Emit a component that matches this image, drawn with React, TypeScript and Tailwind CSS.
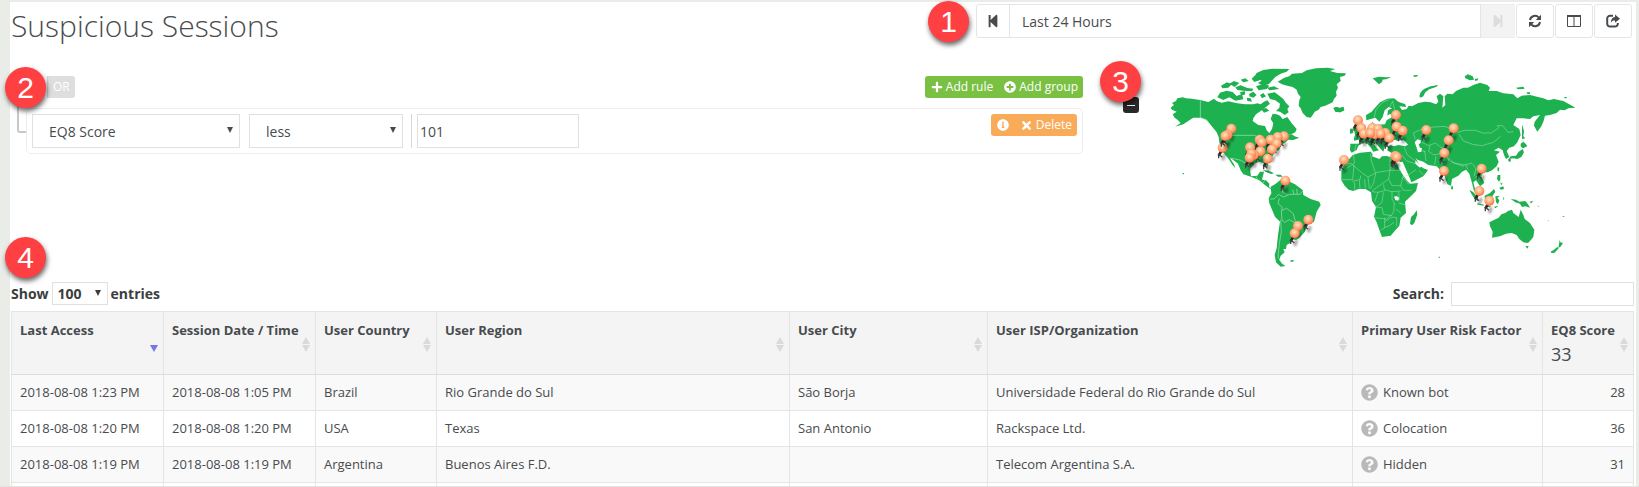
import React, { FC, ReactNode } from "react";
import {
  FaInfoCircle,
  FaPlus,
  FaPlusCircle,
  FaQuestionCircle,
  FaStepBackward,
  FaStepForward,
  FaTimes,
} from "react-icons/fa";

const columns = [
  { title: "Last Access", width: "w-[152px]" },
  { title: "Session Date / Time", width: "w-[152px]" },
  { title: "User Country", width: "w-[121px]" },
  { title: "User Region", width: "w-auto" },
  { title: "User City", width: "w-[198px]" },
  { title: "User ISP/Organization", width: "w-[365px]" },
  { title: "Primary User Risk Factor", width: "w-[190px]" },
  { title: "EQ8 Score", width: "w-[91px]" },
];

const sessions = [
  {
    last: "2018-08-08 1:23 PM",
    start: "2018-08-08 1:05 PM",
    country: "Brazil",
    region: "Rio Grande do Sul",
    city: "São Borja",
    isp: "Universidade Federal do Rio Grande do Sul",
    risk: "Known bot",
    score: 28,
  },
  {
    last: "2018-08-08 1:20 PM",
    start: "2018-08-08 1:20 PM",
    country: "USA",
    region: "Texas",
    city: "San Antonio",
    isp: "Rackspace Ltd.",
    risk: "Colocation",
    score: 36,
  },
  {
    last: "2018-08-08 1:19 PM",
    start: "2018-08-08 1:19 PM",
    country: "Argentina",
    region: "Buenos Aires F.D.",
    city: "",
    isp: "Telecom Argentina S.A.",
    risk: "Hidden",
    score: 31,
  },
];

// pin heads on the map, back to front
const pins = [
  [244, 221], [232, 240], [218, 278], [226, 243],
  [329, 254], [402, 244], [383, 246], [362, 254], [335, 262], [380, 265],
  [366, 283], [353, 311], [331, 289], [300, 277], [312, 300], [304, 296], [299, 308],
  [406, 377], [475, 494], [444, 513], [434, 535], [582, 315],
  [738, 180], [740, 215], [758, 227], [624, 196], [634, 219], [642, 236],
  [667, 219], [684, 222], [676, 238], [706, 234], [692, 236], [661, 234], [718, 249],
  [829, 225], [911, 220], [896, 256], [883, 294], [736, 303], [740, 306],
  [882, 348], [995, 341], [988, 408], [1018, 437],
];

const RefreshIcon: FC = () => (
  <svg viewBox="0 0 14 14" className="size-[14px]" fill="none" stroke="currentColor" strokeWidth="2">
    <path d="M2 6A5 5 0 0 1 10.8 3.6" />
    <path d="M12 8A5 5 0 0 1 3.2 10.4" />
    <path d="M13 .8V6H7.8zM1 13.200V8h5.200z" fill="currentColor" stroke="none" />
  </svg>
);

const ColumnsIcon: FC = () => (
  <svg viewBox="0 0 14 14" className="size-[14px]" fill="none" stroke="currentColor">
    <path d="M.5 1.500h13v11H.5zM7 2v11" />
    <path d="M0 2h14" strokeWidth="2" />
  </svg>
);

const ShareIcon: FC = () => (
  <svg viewBox="0 0 14 14" className="size-[14px]">
    <path
      d="M7 1.800H4A2.800 2.800 0 0 0 1.200 4.600v5.200A2.800 2.800 0 0 0 4 12.600h5a2.800 2.800 0 0 0 2.800-2.800V9"
      fill="none"
      stroke="currentColor"
      strokeWidth="2"
    />
    <path d="M9 .5 14 4.700 9 8.800V6.500C7 6.400 5.800 7 4.900 8.600 4.900 5.200 6.200 3.200 9 2.900z" fill="currentColor" />
  </svg>
);

const Caret: FC<{ className: string }> = ({ className }) => (
  <svg viewBox="0 0 6 6" className={`pointer-events-none absolute size-[6px] ${className}`}>
    <path d="M0 0h6L3 6z" fill="currentColor" />
  </svg>
);

const Badge: FC<{ children: ReactNode; className: string }> = ({ children, className }) => (
  <span
    className={`absolute z-10 grid size-[41px] place-content-center rounded-full bg-[#ff4043] font-['Liberation_Sans',sans-serif] text-[30px] leading-none text-white shadow-[1px_3px_5px_rgba(0,0,0,0.6)] ${className}`}
  >
    {children}
  </span>
);

const SortIcon: FC<{ sorted: boolean }> = ({ sorted }) => (
  <svg viewBox="0 0 8 15" className="absolute right-[5px] top-[25px] h-[15px] w-[8px]">
    {!sorted && <path d="M4 0l4 7H0z" fill="#dadada" />}
    <path d="M0 8h8l-4 7z" fill={sorted ? "#7479e2" : "#dadada"} />
  </svg>
);

const WorldMap: FC = () => (
  <svg viewBox="0 0 1320 645" className="h-[215px] w-[440px]" role="img" aria-label="Sessions by location">
    <defs>
      <radialGradient id="head" cx="45%" cy="38%" r="62%">
        <stop offset="0" stopColor="#ffe6c9" />
        <stop offset="0.500" stopColor="#ffb280" />
        <stop offset="0.850" stopColor="#fd8558" />
        <stop offset="1" stopColor="#f2603a" />
      </radialGradient>
      <filter id="soft" x="-100%" y="-100%" width="300%" height="300%">
        <feGaussianBlur stdDeviation="3" />
      </filter>
    </defs>

    {/* the Americas */}
    <g fill="#1eb14f">
      <path d="M62 158L72 150 66 144 78 138 82 130 98 127 108 130 125 131 150 135 175 141 192 131 200 138 215 143 235 139 262 145 285 148 310 148 322 145 332 148 342 140 352 136 360 146 345 158 332 168 318 178 310 190 308 198 325 210 345 213 350 226 358 234 366 222 370 205 362 192 368 176 380 178 390 182 398 192 412 186 425 205 440 222 436 232 425 237 400 240 425 238 434 244 448 248 430 255 415 254 404 264 392 272 388 284 375 292 366 305 352 316 355 332 350 338 342 326 330 320 312 326 300 342 303 364 322 362 330 350 342 350 336 374 348 376 358 386 357 396 368 404 358 400 345 390 328 376 305 366 280 358 272 346 264 326 246 312 240 310 252 328 256 340 246 328 236 312 226 300 214 284 208 262 206 246 200 232 184 212 170 194 152 188 130 188 118 196 100 208 75 215 92 204 84 196 74 188 68 178 80 170 66 164z" />
      <path d="M202 127L210 113 230 107 248 111 260 123 276 117 280 133 256 137 238 127 220 135zM213 92L231 82 245 88 235 98 217 100zM238 86L252 78 268 84 254 96zM256 97L272 91 292 99 310 101 306 109 280 107 262 105zM272 74L286 70 296 78 280 82zM305 71L319 57 337 55 349 63 361 75 345 81 331 75 313 81zM318 55L340 45 370 41 418 42 410 50 392 56 376 66 356 88 338 92 324 84 336 76 326 66zM318 94L340 86 358 92 350 102 326 106zM352 98L372 94 388 102 358 106zM298 116L310 110 320 120 310 128 298 124zM330 120L340 114 348 124 336 130zM352 116L374 112 388 122 400 132 408 144 418 154 412 162 416 172 404 180 390 170 378 168 388 158 390 146 376 136 360 132zM334 163L348 159 358 167 342 173zM270 112L284 108 286 118 274 122zM290 128L302 130 306 140 292 138z" />
      <path d="M383 80L403 68 418 64 426 56 456 54 470 46 498 40 532 38 556 42 540 48 562 54 588 55 584 62 570 66 572 78 560 88 564 98 558 110 560 122 552 132 548 142 526 152 512 156 506 164 494 170 488 180 482 188 470 186 458 174 452 160 446 152 448 136 452 126 444 116 440 104 428 96 412 92 396 88z" />
      <path d="M551 159L561 156 569 159 581 156 583 166 571 172 557 170zM338 345L356 347 372 355 364 357 348 351zM376 359L392 359 398 365 384 365zM98 354h4v4h-4z" />
      <path d="M362 395L375 388 392 374 405 366 408 375 435 388 458 405 460 420 482 432 508 440 512 450 500 470 495 490 492 500 475 508 465 530 448 548 438 555 425 552 424 562 410 570 408 582 400 582 404 592 392 602 388 615 395 625 406 633 392 635 378 622 374 600 380 580 384 540 390 500 375 485 358 445 356 430 364 415zM422 616l10-1-3 5-8 0z" />
    </g>

    {/* Europe, Africa, Asia and Oceania */}
    <g fill="#1eb14f" transform="translate(540 0)">
      <path d="M109 196L108 180 125 170 135 158 150 142 172 131 192 130 205 140 226 148 228 156 208 154 216 165 230 162 236 152 246 154 265 144 285 140 302 142 318 148 325 140 320 124 330 116 340 124 337 158 346 150 344 124 352 116 368 118 378 108 400 98 414 98 430 90 450 83 472 90 480 98 476 108 500 108 520 115 550 118 562 130 575 122 600 120 640 130 655 136 672 132 700 138 722 150 736 158 715 160 704 166 690 164 680 174 660 180 645 182 640 200 634 214 622 230 612 212 614 200 630 180 610 184 600 192 580 190 560 190 550 210 568 222 572 240 562 262 552 274 538 278 530 288 538 306 528 312 522 300 518 286 506 278 492 286 510 290 498 300 506 320 500 334 486 346 474 352 460 352 454 364 463 384 450 394 438 376 430 382 434 398 445 418 432 408 426 384 418 356 408 344 396 350 385 362 366 372 363 392 352 388 340 350 330 344 320 334 295 330 280 320 262 314 256 308 270 332 280 340 294 345 280 364 245 382 236 372 214 334 208 320 212 308 208 294 186 295 172 286 176 272 200 266 235 270 222 256 205 256 190 266 176 264 165 274 160 290 150 280 140 266 126 260 138 276 147 286 130 290 121 276 108 262 95 266 85 272 80 285 65 293 60 286 61 266 86 266 90 254 80 240 100 234 116 216 125 210 126 200 135 210 165 208 170 196 188 185 180 176 172 182 174 166 186 160 176 156 164 166 158 186 148 200 136 188z" />
      <path d="M71 215L79 213 83 223 91 235 99 243 93 253 73 257 71 251 75 241zM60 222L68 220 70 234 60 236zM10 159L18 156 28 159 40 156 42 166 30 172 16 170z" />
      <path d="M128 70L148 65 168 67 183 66 171 72 157 74 157 80 147 88 139 80zM250 61L262 60 264 64 252 66zM268 124L272 112 282 102 302 94 324 90 320 95 298 103 286 112 280 124 272 128zM404 64L414 58 428 64 432 74 420 76 406 70zM435 72L445 70 443 76 435 78zM558 98L580 95 584 101 564 103zM590 112L600 112 600 117 592 117zM702 126L710 126 710 130 704 130z" />
      <path d="M576 208L582 228 580 244 586 250 576 252 576 228zM572 266L580 260 588 268 592 274 578 280 572 274zM578 282L582 292 574 306 562 312 550 310 536 312 542 304 558 302 566 290zM535 311L543 313 541 321 535 319zM503 336L508 338 506 350 502 346z" />
      <path d="M34 346L44 322 60 310 68 300 90 293 122 290 128 298 126 304 148 312 156 304 170 303 190 308 200 324 208 342 220 362 232 378 240 386 264 384 258 408 240 426 225 440 228 474 212 488 208 512 194 528 182 542 156 546 150 530 140 502 132 486 138 456 126 438 123 412 106 402 86 402 70 408 56 404 44 392 34 376zM260 466L262 478 253 504 246 511 240 506 243 486 252 478z" />
      <path d="M365 391L369 395 369 403 363 403zM418 404L430 412 444 428 444 438 436 434 424 416zM444 445L462 449 460 452 440 448zM464 422L480 414 492 402 496 410 488 422 486 432 472 436 464 430zM496 424L510 422 502 428 508 436 504 448 498 442zM503 360L511 360 511 374 507 380 501 372zM510 382L518 386 514 390zM508 398L520 394 522 402 512 404zM470 454L484 452 478 457zM492 455L506 452 496 460zM542 432L558 434 568 440 586 438 594 448 600 458 586 454 576 456 570 446 556 442zM598 440L610 438 604 445zM520 424L523 432 520 436z" />
      <path d="M478 502L498 492 506 488 514 478 526 474 534 468 546 464 550 474 566 486 572 464 580 480 584 492 600 504 606 514 613 524 610 546 598 560 594 564 580 562 568 552 560 540 545 534 528 536 510 544 486 548 488 530 480 514zM586 573L596 573 592 581zM689 554L691 562 699 564 691 576 685 578 687 568zM682 576L686 580 674 593 664 594 662 590 672 584zM326 605h4v3h-4zM652 495l6 3-2 1zM698 483h5v2h-5zM620 450l8 5-2 1zM636 462l6 3z" />
      <g fill="#fff">
        <path d="M178 268L180 258 196 254 206 260 218 256 218 264 232 270 226 274 206 270 190 274z" />
        <path d="M254 262L262 253 272 256 272 264 266 268 270 278 276 280 274 290 264 292 260 278z" />
        <path d="M207 322L218 320 243 378 236 376zM256 316L274 334 270 338 256 326z" />
        <path d="M192 425l8-2 8 6-4 8-8-2z" />
      </g>
    </g>

    {/* country borders */}
    <g fill="none" stroke="#a9e0bb" strokeWidth="2">
      <path d="M151 137v50l14 6 16 16M230 241h84l14 8 24 6 24-4 20-4M240 309l30 6 18 10 12 16M318 364l6 12M346 374l-8 12M392 396l6 16 14 6M428 404l4 14M440 402l2 16M458 408l-8 10-30 0-20 8-14-8-14 14-12 0M388 430l-4 16 12 10 0 10 14-6 20 16 6 24-2 10M394 466l2 30 8 6 14-8 14 8 6 10M392 494l2 36-6 36-4 40 14 22M434 502l6 14" />
      <path
        transform="translate(540 0)"
        d="M132 190l6-26 20-22 20-8M188 138l6 26M188 138l-10 20M192 180l10 20 12 16M78 268l-4 20M200 215l20 6 10 14M250 234l30-14 32-4 30-2 20 6 22 12 18-6 34 0 22 8 26 0 22-16-4-6 16 0 16 20 16-2M250 234l6 20M388 238l12 20 28 10 28 4 34-10 22-18M276 262l20 10 20-8 18 14 20-6M300 272l-4 18 16 10 24-6 18-14M286 290l-14-4M284 288l4 30M318 304l-4 26M336 296l18 12 2 10M356 310l14 14 36 6 20-6M362 318l16 8 24 8M406 326l8 18M428 326l10 16-6 22M440 344l16 14M180 304l0 42M180 346l34 0M180 346l-40 6-26 14-20-14-30-26-12 0M70 300l4 24-30 20M122 296l2 22 12 34M72 330l-4 44-32 0M92 362l-2 12-20 4M66 376l8 8 0 22M88 376l2 26M104 372l2 28M114 366l4 34M138 352l-8 34-10 16M180 346l-4 26-20 14-30 22M176 372l10 20 26 0 8-30M160 388l4 16 20 6 28-2M212 392l8 14 24 0M220 366l16 22M126 410l18 2 22-6M144 412l-10 28M186 408l0 24 10 18M206 410l2 26M160 412l-4 30-18 14M136 456l20 2 4 20 24 4 8-14 0-22M184 480l-14 12-36-4M164 488l0 30-12 8M164 500l22-14 14 2 0 26M164 518l14-6 14-10M206 444l22 6M198 462l14 12M216 300l14 18 26 8M222 276l10 24 22 16M218 366l20-8 20-14M268 346l12 14M446 358l-10 10"
        strokeWidth="1.500"
      />
    </g>

    <g>
      {pins.map(([x, y], i) => (
        <g key={i} transform={`translate(${x} ${y})`}>
          <path d="M6 20l-6 18" stroke="#000" strokeOpacity="0.350" strokeWidth="10" filter="url(#soft)" />
          <path d="M-4 10l-8 14" stroke="#2a2a2a" strokeWidth="8" />
          <path d="M-12 20l0 12M-9 22l8 7" stroke="#444" strokeWidth="4" />
          <circle r="15" fill="url(#head)" />
        </g>
      ))}
    </g>
  </svg>
);

const iconButton =
  "grid h-[34px] w-[38px] cursor-pointer place-content-center rounded-[3px] border border-[#e3e6e8] bg-white";

const App: FC = () => {
  return (
    <div className="flex h-screen flex-col overflow-hidden border-b border-[#e4e4e4] bg-[#eaece8] pl-[10px] pr-[3px] pt-[2px] font-['Open_Sans',sans-serif] text-[#484b4e]">
      <main className="relative min-h-0 flex-1 overflow-hidden bg-white">
        <header className="flex items-start justify-between pr-1 pt-[2px]">
          <h1 className="pl-px text-[30px] font-light leading-[44px]">Suspicious Sessions</h1>
          <div className="flex w-[656px] gap-px">
            <div className="flex flex-1">
              <button
                aria-label="Previous period"
                className="grid h-[34px] w-[34px] cursor-pointer place-content-center rounded-l-[3px] border border-[#e3e6e8]"
              >
                <FaStepBackward className="size-[14px]" />
              </button>
              <input
                aria-label="Period"
                defaultValue="Last 24 Hours"
                className="h-[34px] min-w-0 flex-1 border-y border-r border-[#e3e6e8] px-3 text-[14px] outline-none"
              />
              <button
                aria-label="Next period"
                disabled
                className="grid h-[34px] w-[34px] place-content-center border-y border-[#ececec] bg-[#f3f3f3] text-[#dcdcdc]"
              >
                <FaStepForward className="size-[14px]" />
              </button>
            </div>
            <button aria-label="Refresh" className={iconButton}>
              <RefreshIcon />
            </button>
            <button aria-label="Columns" className={iconButton}>
              <ColumnsIcon />
            </button>
            <button aria-label="Export" className={iconButton}>
              <ShareIcon />
            </button>
          </div>
        </header>

        <div className="flex">
          <section className="w-2/3 pl-[7px] pr-[11px] pt-[28px]">
            <div className="flex justify-between pl-[30px]">
              <button className="h-[22px] cursor-pointer rounded-r-[3px] border-l border-[#d0d0d0] bg-[#dedede] px-[5px] text-[12px] text-white">
                OR
              </button>
              <div className="flex h-[22px] overflow-hidden rounded-[3px] bg-[#7ac143] text-[12px] font-medium text-white">
                <button className="flex cursor-pointer items-center gap-[3px] px-1.5">
                  <FaPlus className="size-[12px]" />
                  Add rule
                </button>
                <button className="flex cursor-pointer items-center gap-[3px] px-[5px]">
                  <FaPlusCircle className="size-[12px]" />
                  Add group
                </button>
              </div>
            </div>

            <div className="flex items-start">
              <div className="h-[35px] w-[9px] shrink-0 rounded-bl-[3px] border-b-2 border-l-2 border-[#c8c8c8]" />
              <div className="mt-[10px] flex flex-1 items-start rounded-[5px] border border-[#ededed] p-[5px]">
                <div className="relative">
                  <select
                    aria-label="Field"
                    className="h-[34px] w-[208px] appearance-none border border-[#e0e0e0] pl-4 text-[14px]"
                  >
                    <option>EQ8 Score</option>
                  </select>
                  <Caret className="right-[7px] top-[13px]" />
                </div>
                <div className="relative ml-[9px]">
                  <select
                    aria-label="Operator"
                    className="h-[34px] w-[154px] appearance-none border border-[#e0e0e0] pl-4 text-[14px]"
                  >
                    <option>less</option>
                  </select>
                  <Caret className="right-[7px] top-[13px]" />
                </div>
                <div className="ml-2 border-l border-[#d8d8d8] pl-[5px]">
                  <input
                    aria-label="Value"
                    defaultValue="101"
                    className="block h-[34px] w-[162px] border border-[#e0e0e0] px-0.5 text-[14px] outline-none"
                  />
                </div>
                <div className="ml-auto flex h-[22px] rounded-[3px] bg-[#f9ab59] text-[12px] font-medium text-white">
                  <button aria-label="Info" className="cursor-pointer px-1.5">
                    <FaInfoCircle className="size-[12px]" />
                  </button>
                  <button className="flex cursor-pointer items-center gap-[3px] px-[5px]">
                    <FaTimes className="size-[13px]" />
                    Delete
                  </button>
                </div>
              </div>
            </div>
          </section>

          <section className="relative w-1/3 pl-[56px] pt-[7px]">
            <Badge className="left-[6px] top-[13px]">3</Badge>
            <button
              aria-label="Zoom out"
              className="absolute left-[29px] top-[49px] grid size-[16px] cursor-pointer place-content-center rounded-[3px] bg-[#292929]"
            >
              <span className="block h-px w-[8px] bg-white" />
            </button>
            <WorldMap />
          </section>
        </div>

        <div className="mt-[11px] flex h-[25px] items-center justify-between pl-px pr-0.5 text-[14px] font-bold">
          <label className="flex items-center gap-[3px] text-[#3b3e40]">
            Show
            <span className="relative">
              <select className="h-[23px] w-[56px] appearance-none border border-[#e0e0e0] pl-[5px] font-bold">
                <option>100</option>
              </select>
              <Caret className="right-[7px] top-[8px]" />
            </span>
            entries
          </label>
          <label className="flex items-center gap-[7px] text-[#3b3e40]">
            Search:
            <input type="search" className="h-[24px] w-[183px] border border-[#e0e0e0] px-1 font-normal outline-none" />
          </label>
        </div>

        <div className="pl-px pr-0.5 pt-[5px]">
          <table className="w-full table-fixed border-collapse text-left text-[13px]">
            <thead>
              <tr className="h-[63px] bg-[#f4f4f4] align-top">
                {columns.map((col, i) => (
                  <th
                    key={col.title}
                    className={`relative border border-[#e4e4e4] border-b-[#dcdcdc] px-2 pt-2 leading-[20px] whitespace-nowrap ${col.width}`}
                  >
                    {col.title}
                    {col.title === "EQ8 Score" && (
                      <div className="text-[18px] font-normal leading-[28px]">33</div>
                    )}
                    <SortIcon sorted={i === 0} />
                  </th>
                ))}
              </tr>
            </thead>
            <tbody className="[&_td]:border [&_td]:border-[#e4e4e4] [&_td]:px-2">
              {sessions.map((s) => (
                <tr key={s.last} className="h-[36px] odd:bg-[#f9f9f9]">
                  <td>{s.last}</td>
                  <td>{s.start}</td>
                  <td>{s.country}</td>
                  <td>{s.region}</td>
                  <td>{s.city}</td>
                  <td>{s.isp}</td>
                  <td>
                    <div className="flex items-center gap-[5px]">
                      <FaQuestionCircle className="size-[17px] text-[#b9b9b9]" />
                      {s.risk}
                    </div>
                  </td>
                  <td className="text-right">{s.score}</td>
                </tr>
              ))}
              <tr className="h-[36px]">
                {columns.map((col) => (
                  <td key={col.title} />
                ))}
              </tr>
            </tbody>
          </table>
        </div>
      </main>

      {/* numbered callouts */}
      <Badge className="left-[928px] top-[1px]">1</Badge>
      <Badge className="left-[5px] top-[67px]">2</Badge>
      <Badge className="left-[5px] top-[237px]">4</Badge>
    </div>
  );
};

export default App;
